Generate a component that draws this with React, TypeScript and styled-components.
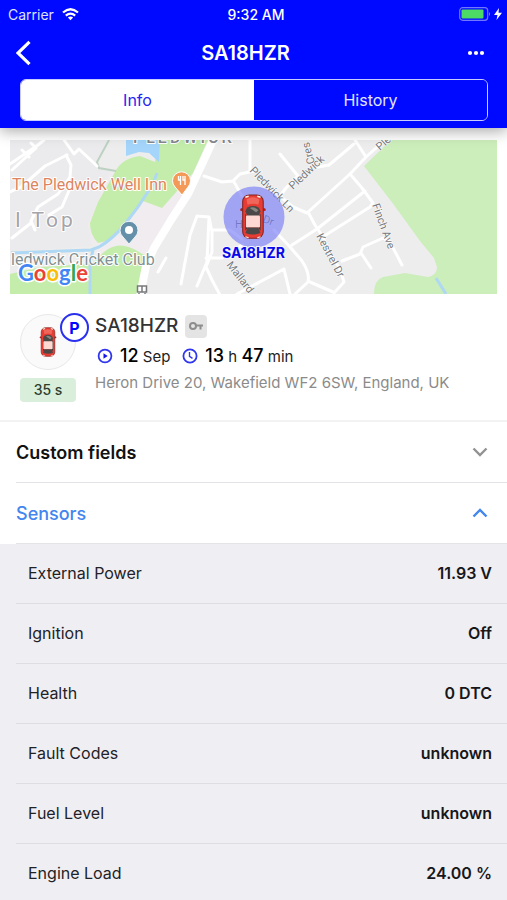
import React, { useState } from "react";
import styled, { createGlobalStyle } from "styled-components";

const BLUE = "#0009ff";
const ACCENT = "#4286ee";

const GlobalStyle = createGlobalStyle`
  * { box-sizing: border-box; }
  html { scrollbar-width: none; }
  html, body { margin: 0; background: #fff; }
  body { font-family: Inter, "Liberation Sans", sans-serif; color: #111; }
  button { font: inherit; color: inherit; background: none; border: 0; padding: 0; cursor: pointer; }
  svg { display: block; }
  h1, h2, p, dl, dd, dt { margin: 0; }
`;

const Page = styled.div`
  min-height: 100vh;
  display: flex;
  flex-direction: column;
`;

const Header = styled.header`
  position: sticky;
  top: 0;
  z-index: 1;
  flex: none;
  background: ${BLUE};
  color: #fff;
  padding-bottom: 7px;
  box-shadow: 0 3px 14px rgba(0, 0, 0, 0.35);
`;

const StatusBar = styled.div`
  display: grid;
  grid-template-columns: 1fr auto 1fr;
  align-items: center;
  height: 28px;
  padding: 0 5px 0 8px;
  font-size: 14px;
`;

const Carrier = styled.div`
  display: flex;
  align-items: center;
  gap: 8px;
  color: #dfe1ff;
`;

const Clock = styled.time`
  font-weight: 500;
  padding-left: 2px;
`;

const Power = styled.div`
  display: flex;
  justify-content: flex-end;
  align-items: center;
  gap: 3px;
`;

const TitleBar = styled.div`
  display: grid;
  grid-template-columns: 60px 1fr 60px;
  align-items: center;
  height: 51px;
  padding-bottom: 2px;
`;

const Title = styled.h1`
  text-align: center;
  font-size: 20px;
  line-height: 24px;
  font-weight: 600;
  padding-right: 16px;
`;

const BackButton = styled.button`
  padding: 8px 16px;
  justify-self: start;
`;

const MoreButton = styled.button`
  padding: 8px 21px;
  justify-self: end;
`;

const Segments = styled.div`
  display: grid;
  grid-template-columns: 1fr 1fr;
  height: 42px;
  margin: 0 19px 0 20px;
  border: 1px solid #c9ccff;
  border-radius: 6px;
  overflow: hidden;
`;

const Segment = styled.button<{ $active: boolean }>`
  font-size: 16px;
  background: ${(p) => (p.$active ? "#fff" : BLUE)};
  color: ${(p) => (p.$active ? "#2626f0" : "#e2e4ff")};
`;

const MapFrame = styled.div`
  flex: none;
  height: 154px;
  margin: 12px 10px 0;
  svg { width: 100%; height: 100%; }
`;

const Vehicle = styled.section`
  flex: none;
  display: grid;
  grid-template-columns: 75px 1fr;
  padding: 20px 16px 18px 20px;
  border-bottom: 2px solid #f3f3f4;
`;

const AvatarColumn = styled.div`
  display: flex;
  flex-direction: column;
  gap: 8px;
`;

const Avatar = styled.div`
  position: relative;
  width: 56px;
  height: 56px;
  display: grid;
  place-items: center;
  border: 1px solid #e8e8e8;
  border-radius: 50%;
  background: #fafafa;
`;

const ParkBadge = styled.span`
  position: absolute;
  top: -2px;
  left: 39px;
  width: 29px;
  height: 29px;
  display: grid;
  place-items: center;
  border: 2px solid #2a30ef;
  border-radius: 50%;
  background: #fff;
  color: ${BLUE};
  font-size: 16px;
  line-height: 20px;
  font-weight: 700;
`;

const Age = styled.span`
  width: 56px;
  height: 24px;
  border-radius: 4px;
  background: #d9eedb;
  color: #2d3d2e;
  font-size: 14px;
  line-height: 24px;
  font-weight: 500;
  text-align: center;
`;

const Details = styled.div`
  min-width: 0;
`;

const NameRow = styled.div`
  display: flex;
  align-items: center;
  gap: 7px;
  height: 24px;
`;

const Name = styled.h2`
  font-size: 19px;
  line-height: 24px;
  font-weight: 500;
  color: #333;
`;

const KeyTag = styled.span`
  display: grid;
  place-items: center;
  width: 22px;
  height: 23px;
  border-radius: 4px;
  background: #e4e4e4;
`;

const Times = styled.div`
  display: flex;
  align-items: center;
  height: 24px;
  margin-top: 6px;
  padding-left: 2px;
`;

const TimeText = styled.span`
  margin: 0 12px 0 7px;
  font-size: 15px;
  line-height: 24px;
  color: #222;
  white-space: nowrap;
  b { font-size: 18px; font-weight: 500; color: #000; }
`;

const Address = styled.p`
  margin-top: 5px;
  font-size: 15px;
  line-height: 20px;
  color: #8b8b8b;
`;

const PanelToggle = styled.button<{ $open: boolean }>`
  flex: none;
  display: flex;
  justify-content: space-between;
  align-items: center;
  height: 61px;
  margin-left: 16px;
  padding-right: 19px;
  border-bottom: 1px solid #e4e4e8;
  font-size: 18px;
  font-weight: ${(p) => (p.$open ? 500 : 600)};
  color: ${(p) => (p.$open ? ACCENT : "#111")};
  text-align: left;
`;

const SensorList = styled.dl`
  flex: 1 0 auto;
  background: #efeef3;
  padding-left: 16px;
`;

const SensorRow = styled.div`
  display: flex;
  justify-content: space-between;
  align-items: center;
  height: 60px;
  padding: 0 15px 2px 12px;
  border-bottom: 1px solid #dedee2;
  font-size: 16px;
`;

const SensorName = styled.dt`
  color: #222226;
`;

const SensorValue = styled.dd`
  font-weight: 600;
  color: #17171a;
`;

function Car() {
  return (
    <g>
      <path d="M1 15.5Q0 13 3 14L4 17M23 15.5Q24 13 21 14L20 17" fill="#c92120" stroke="#a51b1a" />
      <rect x="2.5" y="1" width="19" height="40" rx="6" fill="#e73c33" stroke="#842522" strokeWidth="1" />
      <path d="M6 5Q12 1 18 5L17 10Q12 8 7 10Z" fill="#f1665a" />
      <path d="M5 3l3-1M16 2l3 1" stroke="#fff1df" strokeWidth="1.5" />
      <path d="M5 16Q6 11 12 11Q18 11 19 16L17 21H7Z" fill="#4b4947" />
      <path d="M9 13Q13 11 17 15L15 17Z" fill="#898580" />
      <path d="M5 18L7 22V31L5 34ZM19 18L17 22V31L19 34Z" fill="#393736" />
      <rect x="5.500" y="20" width="13" height="11" rx="1" fill="#ffd9d2" />
      <path d="M7 31H17L19 36Q12 39 5 36Z" fill="#4b4947" />
      <path d="M5 39.500l3 1M16 40.500l3-1" stroke="#fff1df" strokeWidth="1" />
    </g>
  );
}

function CarIcon() {
  return (
    <svg width="18" height="30" viewBox="0 0 24 42">
      <Car />
    </svg>
  );
}

function Chevron({ open }: { open: boolean }) {
  return (
    <svg width="16" height="10" viewBox="0 0 16 10" fill="none" stroke={open ? ACCENT : "#929292"} strokeWidth="2.4">
      <path d={open ? "M1.5 8.5L8 2l6.500 6.500" : "M1.500 1.500L8 8l6.500-6.500"} />
    </svg>
  );
}

function LocationMap() {
  return (
    <svg viewBox="10 140 487 154" preserveAspectRatio="xMidYMid slice" role="img" aria-label="Map showing SA18HZR">
      <rect x="10" y="140" width="487" height="154" fill="#ededed" />
      <path d="M98 140L100 165L125 172L90 225L97 243L11 251V205L70 160L64 140Z" fill="#f0ecee" />
      <path d="M10 140H108L96 165L110 172L88 224L92 246L10 252Z" fill="#ebebed" />
      <path d="M98 242L143 200L162 207L193 174L210 140L180 212L148 260L140 294H90Z" fill="#f0ecef" />

      <path d="M157 140H208L193 173L162 208L143 201L119 232L107 241L98 243Q90 235 90 223L98 202L115 172Q122 158 140 156L155 162Z" fill="#c4edac" />
      <path d="M10 274L40 267L91 264L104 252Q119 239 139 252L146 256L139 294H10Z" fill="#c4edac" />
      <path d="M391 140H497V294H374Q374 280 383 277L405 273L428 277Q437 275 437 267L434 258L420 241L394 205L364 166Z" fill="#cceebb" />
      <path d="M126 140H160L159 162L149 153L139 152L126 156Z" fill="#a5d5fb" />

      <g fill="none" stroke="#aed8f3" strokeWidth="3">
        <path d="M157 173L153 184L138 207L125 224Q113 239 99 247L91 250L11 253" />
        <path d="M93 250L90 263V294" />
        <path d="M436 278L446 294" />
      </g>
      <path d="M109 140L97 162L99 168L116 171" fill="none" stroke="#bdd2c2" strokeWidth="2" />

      <g fill="none" stroke="#fff" strokeLinejoin="round" strokeLinecap="round">
        <path d="M214 138L202 164L188 194L171 220L154 248L146 266L140 296" strokeWidth="8" />
        <g strokeWidth="3">
          <path d="M10 164L38 145L44 140M12 170L36 148L31 143M22 150L29 157M64 140L74 154L79 149M80 150L97 166M10 192L21 187L45 166L67 155M66 155L71 165L70 177L58 194L38 207L31 221L35 230M71 186L62 207L49 215M31 223L12 238" />
          <path d="M204 176L222 182L233 181L240 174L254 171M250 140V171M234 182L242 196" />
          <path d="M280 154L298 176L286 188L280 196M318 167L329 165L354 144M355 140L366 157L350 174L307 213L293 207L281 197M366 157L384 141" />
          <path d="M350 174L362 188L373 203L370 207L321 238M365 191L317 229L292 245M308 212L315 225L323 237L330 253L340 269L344 282L334 293M342 261L360 254L363 247L383 238L390 242L402 265M361 253L371 268" />
          <path d="M274 230L291 248L302 261Q310 273 308 282L295 294M310 282L333 292M237 294L284 269M284 269L290 294M197 216L209 217L212 232V252L206 267M209 217L207 262L197 286M197 216L190 235L181 284M212 230H230L242 239M206 258H222L242 245M206 267L212 280L220 295M166 258L158 272" />
        </g>
      </g>

      <g fontFamily="Roboto, sans-serif" fill="#85888d" stroke="#fff" strokeWidth="2" paintOrder="stroke" strokeLinejoin="round">
        <text x="133" y="143" fontSize="16" fontWeight="500" letterSpacing="3">PLEDWICK</text>
        <text x="12" y="190" fontSize="16" fill="#dc8460">The Pledwick Well Inn</text>
        <text x="15" y="227" fontSize="21" fill="#a4a4aa" letterSpacing="3">I Top</text>
        <text x="11" y="265" fontSize="16" fill="#829092">ledwick Cricket Club</text>
        <g fontSize="11" strokeWidth="1" fill="#77797c">
          <text transform="translate(249 171) rotate(46)">Pledwick Ln</text>
          <text transform="translate(293 190) rotate(-43)">Pledwick</text>
          <text transform="translate(315 163) rotate(-106)">Cres</text>
          <text transform="translate(372 205) rotate(70)">Finch Ave</text>
          <text transform="translate(316 236) rotate(62)">Kestrel Dr</text>
          <text transform="translate(226 265) rotate(52)">Mallard Ave</text>
          <text transform="translate(380 151) rotate(-42)">Pledwick</text>
          <text x="235" y="228">H</text>
          <text transform="translate(262 222) rotate(20)">Dr</text>
        </g>
      </g>
      <path d="M137.500 286h9v6h-9zM142 286v6M139 293v1M145 293v1" fill="none" stroke="#77797b" strokeWidth="1.500" />

      <path d="M182 195L175 187A9 9 0 1 1 188 187Z" fill="#f39a58" stroke="#fff" />
      <path d="M178.500 176v4h2v5M180.500 176v5M183 176v4h2v5M185 176v4" fill="none" stroke="#fff" strokeWidth="1.300" />
      <path d="M129 244L123 237A9 9 0 1 1 135 237Z" fill="#6590a9" stroke="#eef4f6" />
      <circle cx="129" cy="230" r="4" fill="#fff" />

      <text x="18" y="281" fontFamily="Lato, sans-serif" fontSize="22" fontWeight="700" stroke="#fff" strokeWidth="3" paintOrder="stroke" strokeLinejoin="round">
        <tspan fill="#4285f4">G</tspan><tspan fill="#ea4335">o</tspan><tspan fill="#fbbc05">o</tspan><tspan fill="#4285f4">g</tspan><tspan fill="#34a853">l</tspan><tspan fill="#ea4335">e</tspan>
      </text>

      <circle cx="254" cy="217" r="30.500" fill="#7377f5" fillOpacity="0.62" />
      <g transform="translate(240 194) scale(1.08)"><Car /></g>
      <text x="253.500" y="258" textAnchor="middle" fontFamily="Inter, sans-serif" fontSize="14" fontWeight="700" fill="#0908e8" stroke="#f4f4ff" strokeWidth="2" paintOrder="stroke">SA18HZR</text>
    </svg>
  );
}

const sensors = [
  ["External Power", "11.93 V"],
  ["Ignition", "Off"],
  ["Health", "0 DTC"],
  ["Fault Codes", "unknown"],
  ["Fuel Level", "unknown"],
  ["Engine Load", "24.00 %"],
];

export default function App() {
  const [tab, setTab] = useState("Info");
  const [fieldsOpen, setFieldsOpen] = useState(false);
  const [sensorsOpen, setSensorsOpen] = useState(true);

  return (
    <>
      <GlobalStyle />
      <Page>
        <Header>
          <StatusBar>
            <Carrier>
              Carrier
              <svg width="17" height="13" viewBox="0 0 17 13" fill="none" stroke="#fff" strokeWidth="2.200">
                <path d="M1 4.500Q8.500-2 16 4.500M3.800 7.600Q8.500 3.500 13.200 7.600" />
                <path d="M5.900 9.500Q8.500 7.500 11.100 9.500L8.500 12.300Z" fill="#fff" stroke="none" />
              </svg>
            </Carrier>
            <Clock>9:32 AM</Clock>
            <Power>
              <svg width="32" height="14" viewBox="0 0 32 14">
                <rect x="0.700" y="0.700" width="28" height="12.600" rx="3" fill="none" stroke="#7177ff" strokeWidth="1.200" />
                <rect x="2.500" y="2.500" width="22" height="9" rx="1" fill="#4cd964" />
                <path d="M30 5v4q2-2 0-4" fill="#8489ff" />
              </svg>
              <svg width="8" height="12" viewBox="0 0 8 12">
                <path d="M5 0L0 7h3.500L2.500 12L8 4.800H4.500Z" fill="#fff" />
              </svg>
            </Power>
          </StatusBar>
          <TitleBar>
            <BackButton aria-label="Back">
              <svg width="15" height="26" viewBox="0 0 15 26" fill="none" stroke="#fff" strokeWidth="3.200">
                <path d="M13.500 1.800L2 13l11.500 11.200" />
              </svg>
            </BackButton>
            <Title>SA18HZR</Title>
            <MoreButton aria-label="More options">
              <svg width="20" height="6" viewBox="0 0 20 6" fill="#fff">
                <circle cx="4" cy="3" r="2.100" />
                <circle cx="10" cy="3" r="2.100" />
                <circle cx="16" cy="3" r="2.100" />
              </svg>
            </MoreButton>
          </TitleBar>
          <Segments role="tablist">
            {["Info", "History"].map((name) => (
              <Segment key={name} role="tab" aria-selected={tab === name} $active={tab === name} onClick={() => setTab(name)}>
                {name}
              </Segment>
            ))}
          </Segments>
        </Header>

        <MapFrame>
          <LocationMap />
        </MapFrame>

        <Vehicle>
          <AvatarColumn>
            <Avatar>
              <CarIcon />
              <ParkBadge>P</ParkBadge>
            </Avatar>
            <Age>35 s</Age>
          </AvatarColumn>
          <Details>
            <NameRow>
              <Name>SA18HZR</Name>
              <KeyTag>
                <svg width="14" height="8" viewBox="0 0 14 8" fill="none" stroke="#8d8d8d" strokeWidth="2">
                  <circle cx="4" cy="4" r="3" />
                  <path d="M7 3.500h7M11.500 4v3.500" />
                </svg>
              </KeyTag>
            </NameRow>
            <Times>
              <svg width="16" height="16" viewBox="0 0 16 16" fill="none" stroke="#3036ee" strokeWidth="1.800">
                <circle cx="8" cy="8" r="6.400" />
                <path d="M6.500 5.300v5.400L10.700 8Z" fill="#1117ee" stroke="none" />
              </svg>
              <TimeText><b>12</b> Sep</TimeText>
              <svg width="16" height="16" viewBox="0 0 16 16" fill="none" stroke="#3036ee" strokeWidth="1.800">
                <circle cx="8" cy="8" r="6.600" />
                <path d="M7.500 4v4.300l3 2" strokeWidth="1.400" />
              </svg>
              <TimeText><b>13</b> h <b>47</b> min</TimeText>
            </Times>
            <Address>Heron Drive 20, Wakefield WF2 6SW, England, UK</Address>
          </Details>
        </Vehicle>

        <PanelToggle $open={fieldsOpen} aria-expanded={fieldsOpen} onClick={() => setFieldsOpen(!fieldsOpen)}>
          Custom fields
          <Chevron open={fieldsOpen} />
        </PanelToggle>
        <PanelToggle $open={sensorsOpen} aria-expanded={sensorsOpen} onClick={() => setSensorsOpen(!sensorsOpen)}>
          Sensors
          <Chevron open={sensorsOpen} />
        </PanelToggle>
        {sensorsOpen && (
          <SensorList>
            {sensors.map(([name, value]) => (
              <SensorRow key={name}>
                <SensorName>{name}</SensorName>
                <SensorValue>{value}</SensorValue>
              </SensorRow>
            ))}
          </SensorList>
        )}
      </Page>
    </>
  );
}
